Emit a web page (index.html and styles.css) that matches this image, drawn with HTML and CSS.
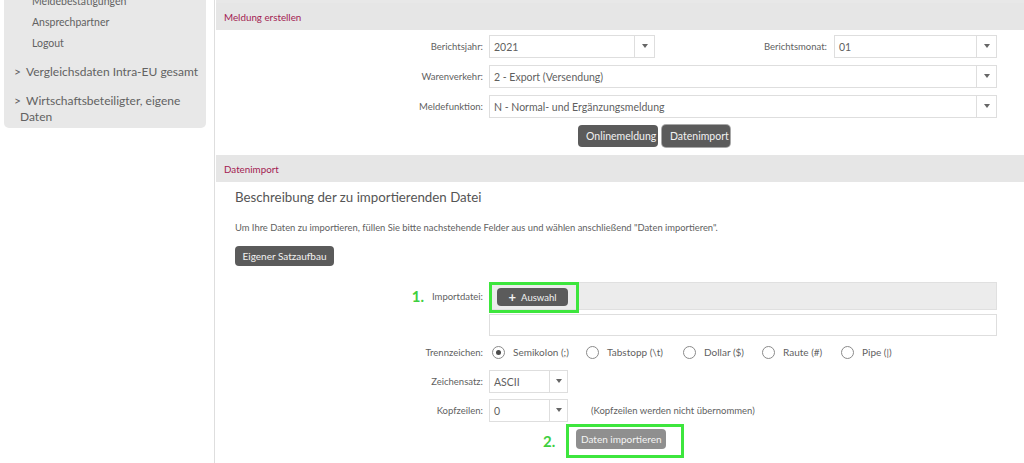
FILE: index.html
```html
<!DOCTYPE html>
<html lang="de">
<head>
<meta charset="utf-8">
<title>Datenimport</title>
<link rel="stylesheet" href="styles.css">
</head>
<body>
<div class="page">
  <aside class="side">
    <nav class="menu">
      <ul class="sub">
        <li>Meldebestätigungen</li>
        <li>Ansprechpartner</li>
        <li>Logout</li>
      </ul>
      <div class="main-items">
        <div class="main-item"><span class="chev">&gt;</span>Vergleichsdaten Intra-EU gesamt</div>
        <div class="main-item"><span class="chev">&gt;</span>Wirtschaftsbeteiligter, eigene<br>Daten</div>
      </div>
    </nav>
  </aside>
  <main class="content">
    <div class="prev-end"></div>
    <section class="panel">
      <header class="panel-head">Meldung erstellen</header>
      <div class="panel-body form-top">
        <div class="row">
          <span class="lbl">Berichtsjahr:</span>
          <div class="split">
            <div class="select"><span class="val">2021</span><span class="arrow"></span></div>
            <span class="lbl">Berichtsmonat:</span>
            <div class="select"><span class="val">01</span><span class="arrow"></span></div>
          </div>
        </div>
        <div class="row">
          <span class="lbl">Warenverkehr:</span>
          <div class="select"><span class="val">2 - Export (Versendung)</span><span class="arrow"></span></div>
        </div>
        <div class="row">
          <span class="lbl">Meldefunktion:</span>
          <div class="select"><span class="val">N - Normal- und Ergänzungsmeldung</span><span class="arrow"></span></div>
        </div>
        <div class="row">
          <span></span>
          <div class="btns">
            <button class="btn">Onlinemeldung</button>
            <button class="btn active">Datenimport</button>
          </div>
        </div>
      </div>
    </section>
    <section class="panel">
      <header class="panel-head">Datenimport</header>
      <div class="panel-body import">
        <div class="intro">
          <h2 class="title">Beschreibung der zu importierenden Datei</h2>
          <p class="para">Um Ihre Daten zu importieren, füllen Sie bitte nachstehende Felder aus und wählen anschließend "Daten importieren".</p>
          <button class="btn btn-own">Eigener Satzaufbau</button>
        </div>
        <div class="row row-file">
          <span class="lbl"><span class="step">1.</span>Importdatei:</span>
          <div class="filebar">
            <span class="hl hl-1"><button class="btn btn-add"><span class="plus">+</span>Auswahl</button></span>
          </div>
        </div>
        <div class="row row-box">
          <span></span>
          <div class="filebox"></div>
        </div>
        <div class="row row-radio">
          <span class="lbl">Trennzeichen:</span>
          <div class="radios">
            <label class="opt"><span class="radio checked"></span>Semikolon (;)</label>
            <label class="opt"><span class="radio"></span>Tabstopp (\t)</label>
            <label class="opt"><span class="radio"></span>Dollar ($)</label>
            <label class="opt"><span class="radio"></span>Raute (#)</label>
            <label class="opt"><span class="radio"></span>Pipe (|)</label>
          </div>
        </div>
        <div class="row row-cs">
          <span class="lbl">Zeichensatz:</span>
          <div class="select small"><span class="val">ASCII</span><span class="arrow"></span></div>
        </div>
        <div class="row row-kz">
          <span class="lbl">Kopfzeilen:</span>
          <div class="inline">
            <div class="select small"><span class="val">0</span><span class="arrow"></span></div>
            <span class="note">(Kopfzeilen werden nicht übernommen)</span>
          </div>
        </div>
        <div class="row row-go">
          <span></span>
          <div class="go">
            <span class="step step-2">2.</span>
            <span class="hl hl-2"><button class="btn btn-disabled">Daten importieren</button></span>
          </div>
        </div>
      </div>
    </section>
  </main>
</div>
</body>
</html>
```

FILE: styles.css
```css
* { box-sizing: border-box; }
html, body { margin: 0; padding: 0; }
body {
  font-family: Lato, "Liberation Sans", sans-serif;
  color: #5f5f5f;
  background: #fff;
}
.page { display: flex; height: 463px; overflow: hidden; }

/* sidebar */
.side {
  width: 215px;
  flex: none;
  padding-left: 4px;
  border-right: 1px solid #dedede;
}
.menu {
  width: 202px;
  margin-top: -9px;
  background: #e8e8e8;
  border-radius: 0 0 5px 5px;
  padding-bottom: 3px;
}
.sub { list-style: none; margin: 0; padding: 0 0 0 28px; }
.sub li { line-height: 21px; font-size: 10.5px; color: #626262; }
.main-items { display: flex; flex-direction: column; gap: 13px; margin-top: 10px; }
.main-item {
  font-size: 12px;
  line-height: 16px;
  color: #626262;
  padding-left: 16px;
  text-indent: -6px;
}
.chev { display: inline-block; width: 12px; text-indent: 0; }

/* content */
.content { flex: 1; padding-left: 1px; min-width: 0; }
.prev-end { height: 3px; background: #e8e8e8; }
.panel-head {
  height: 27px;
  background: #e6e6e6;
  color: #a31c52;
  font-size: 9.8px;
  padding-left: 8px;
  display: flex;
  align-items: center;
}
.panel-body { padding-right: 27px; }
.form-top {
  display: flex;
  flex-direction: column;
  gap: 7px;
  padding-top: 5px;
  padding-bottom: 8px;
}
.row {
  display: grid;
  grid-template-columns: 267px 1fr;
  column-gap: 6px;
  align-items: center;
}
.lbl {
  font-size: 9.5px;
  color: #5f5f5f;
  text-align: right;
  white-space: nowrap;
}
.split {
  display: grid;
  grid-template-columns: 166px 1fr 163px;
  column-gap: 7px;
  align-items: center;
}
.select {
  height: 23px;
  border: 1px solid #dedede;
  background: #fff;
  display: flex;
  align-items: stretch;
}
.select .val {
  flex: 1;
  display: flex;
  align-items: center;
  padding-left: 4px;
  font-size: 10.5px;
  color: #5f5f5f;
  white-space: nowrap;
  overflow: hidden;
}
.select .arrow {
  width: 20px;
  border-left: 1px solid #dedede;
  display: flex;
  align-items: center;
  justify-content: center;
}
.select .arrow::after {
  content: "";
  border-left: 3.5px solid transparent;
  border-right: 3.5px solid transparent;
  border-top: 4px solid #666;
  margin-top: -2px;
}
.select.small { width: 79px; }
.select.small .arrow { width: 18px; }

.btns { display: flex; gap: 4px; padding-left: 89px; }
.btn {
  font-family: inherit;
  border: none;
  border-radius: 4px;
  background: #5b5b5b;
  color: #f2f2f2;
  font-size: 10.5px;
  height: 22px;
  padding: 0 8px;
  cursor: pointer;
}
.btns .btn:first-child { width: 80px; }
.btns .btn.active { width: 68px; box-shadow: 0 0 0 1px #a8a8a8; }

/* import panel */
.import { padding-bottom: 10px; }
.intro { padding-left: 19px; }
.title {
  margin: 0;
  padding-top: 6px;
  font-size: 13.3px;
  line-height: 18px;
  font-weight: normal;
  color: #555;
}
.para {
  margin: 15px 0 0;
  font-size: 9.4px;
  line-height: 14px;
  color: #5f5f5f;
}
.btn-own { margin-top: 11px; height: 20px; width: 99px; padding: 0; font-size: 10px; }

.row-file { margin-top: 16px; }
.step {
  color: #3fcf3f;
  font-weight: bold;
  font-size: 15px;
  margin-right: 8px;
  vertical-align: -2px;
}
.filebar {
  height: 28px;
  background: #ececec;
  border: 1px solid #e0e0e0;
  display: flex;
  align-items: flex-start;
  overflow: visible;
}
.hl { display: inline-flex; border: 3px solid #3de63d; }
.hl-1 {
  margin: -1px 0 0 -1px;
  padding: 3px 8px 4px 5px;
}
.btn-add {
  height: 18px;
  width: 71px;
  padding: 0;
  font-size: 9.5px;
  display: flex;
  align-items: center;
  justify-content: center;
  gap: 5px;
}
.plus { font-weight: bold; font-size: 13px; line-height: 1; }
.row-box { margin-top: 4px; }
.filebox { height: 22px; border: 1px solid #dedede; }

.row-radio { margin-top: 6px; height: 20px; }
.radios {
  display: grid;
  grid-template-columns: 94px 97px 79px 79px auto;
  padding-left: 3px;
  align-items: center;
}
.opt {
  display: flex;
  align-items: center;
  gap: 8px;
  font-size: 10px;
  color: #5f5f5f;
  white-space: nowrap;
}
.radio {
  width: 13px;
  height: 13px;
  border: 1px solid #8a8a8a;
  border-radius: 50%;
  background: #fff;
  display: flex;
  align-items: center;
  justify-content: center;
  flex: none;
}
.radio.checked::after {
  content: "";
  width: 5px;
  height: 5px;
  border-radius: 50%;
  background: #4a4a4a;
}
.row-cs { margin-top: 8px; }
.row-kz { margin-top: 6px; }
.inline { display: flex; align-items: center; gap: 23px; }
.note { font-size: 9.5px; color: #5f5f5f; }

.row-go { margin-top: 2px; }
.go { display: flex; align-items: center; padding-left: 54px; }
.step-2 { margin-right: 11px; vertical-align: 0; }
.hl-2 { padding: 2px 15px 6px 7px; }
.btn-disabled {
  background: #8f8f8f;
  color: #f4f4f4;
  height: 20px;
  width: 90px;
  padding: 0;
  font-size: 10px;
}
```
